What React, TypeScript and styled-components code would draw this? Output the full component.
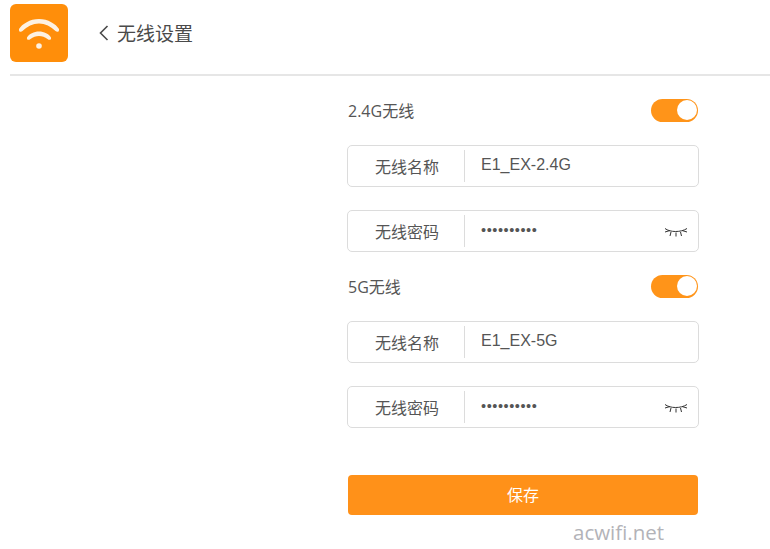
import styled, { createGlobalStyle } from "styled-components";

const FONT = `"Open Sans", "Noto Sans CJK SC", sans-serif`;

const GlobalStyle = createGlobalStyle`
  html, body {
    margin: 0;
    background: #fff;
    font-family: ${FONT};
  }
`;

const Page = styled.div`
  width: 770px;
  height: 549px;
  overflow: hidden;
  padding-left: 10px;
  box-sizing: border-box;
`;

const Header = styled.header`
  display: flex;
  align-items: flex-start;
  height: 76px;
  padding-top: 4px;
  box-sizing: border-box;
  border-bottom: 2px solid #e6e6e6;
`;

const Logo = styled.div`
  width: 58px;
  height: 58px;
  border-radius: 6px;
  background: #ff8e0a;
`;

const BackLink = styled.div`
  display: flex;
  align-items: center;
  gap: 8px;
  height: 58px;
  margin-left: 31px;
  font-size: 19px;
  color: #4a4a4a;
`;

const Form = styled.main`
  width: 352px;
  margin-left: 337px;
  display: flex;
  flex-direction: column;
`;

const SwitchRow = styled.div`
  display: flex;
  align-items: center;
  justify-content: space-between;
  height: 24px;
  margin-top: 22px;
  margin-bottom: 23px;
  padding: 0 1px;
`;

const BandTitle = styled.span`
  padding-top: 2px;
  font-size: 16px;
  line-height: 22px;
  color: #555;
`;

const Toggle = styled.div`
  width: 47px;
  height: 23px;
  border-radius: 12px;
  background: #ff9419;
  display: flex;
  justify-content: flex-end;
  align-items: center;
  padding-right: 1px;
  box-sizing: border-box;
`;

const Knob = styled.span`
  width: 20px;
  height: 20px;
  border-radius: 50%;
  background: #fff;
`;

const Field = styled.div`
  display: flex;
  align-items: center;
  height: 42px;
  box-sizing: border-box;
  border: 1px solid #dcdcdc;
  border-radius: 5px;
  margin-bottom: 23px;
  &:last-child {
    margin-bottom: 0;
  }
`;

const FieldLabel = styled.span`
  width: 117px;
  height: 32px;
  line-height: 34px;
  flex: none;
  box-sizing: border-box;
  border-right: 1px solid #dcdcdc;
  padding-left: 2px;
  text-align: center;
  font-size: 16px;
  color: #555;
`;

const FieldValue = styled.span<{ $dots?: boolean }>`
  flex: 1;
  padding-left: 16px;
  padding-bottom: 3px;
  font-size: ${({ $dots }) => ($dots ? "14.5px" : "16px")};
  letter-spacing: ${({ $dots }) => ($dots ? "0.55px" : "0")};
  color: #555;
  font-family: "Liberation Sans", sans-serif;
`;

const EyeSlot = styled.span`
  display: flex;
  margin-right: 10px;
  margin-top: 3px;
`;

const Section = styled.section`
  display: flex;
  flex-direction: column;
`;

const SaveButton = styled.button`
  height: 40px;
  margin: 47px 1px 0;
  border: none;
  border-radius: 4px;
  background: #ff9119;
  color: #fff;
  font-size: 16px;
  font-family: ${FONT};
  padding: 0 0 3px;
`;

const Watermark = styled.div`
  margin: 5px 0 0 226px;
  font-size: 20.5px;
  line-height: 24px;
  color: #b3b3b8;
  font-family: "Open Sans", sans-serif;
`;

function WifiIcon() {
  return (
    <svg width="58" height="58" viewBox="0 0 58 58">
      <path
        d="M9 25 C12 20 20 15 29 15 C38 15 46 20 49 25 C49.5 28 47 28.5 45.5 27 C41 22.5 35 19.5 29 19.5 C23 19.5 17 22.5 12.5 27 C11 28.5 8.5 28 9 25 Z"
        fill="#fdf1e2"
      />
      <path
        d="M17 33.5 C19 30 24 27.5 29 27.5 C34 27.5 39 30 41 33.5 C41.5 36 39.5 36.5 37.5 35 C35 33 32 32 29 32 C26 32 23 33 20.5 35 C18.5 36.5 16.5 36 17 33.5 Z"
        fill="#fdf1e2"
      />
      <circle cx="29" cy="42" r="2.8" fill="#fdf1e2" />
    </svg>
  );
}

function Chevron() {
  return (
    <svg width="10" height="16" viewBox="0 0 10 16" fill="none">
      <path d="M8.5 1 L1.5 8 L8.5 15" stroke="#4a4a4a" strokeWidth="1.6" />
    </svg>
  );
}

function ClosedEye() {
  return (
    <svg width="24" height="12" viewBox="0 0 24 12" fill="none" stroke="#333" strokeWidth="1">
      <path d="M1 1.5 C6 5.5 17 5.5 23 1.5" />
      <path d="M1 5 L6 3.5 M23 5 L18 3.5 M7 5 L6 9 M12 5.5 V9.5 M16.5 5 L17.5 9" />
    </svg>
  );
}

type Band = { title: string; ssid: string };

const bands: Band[] = [
  { title: "2.4G无线", ssid: "E1_EX-2.4G" },
  { title: "5G无线", ssid: "E1_EX-5G" },
];

export default function App() {
  return (
    <Page>
      <GlobalStyle />
      <Header>
        <Logo>
          <WifiIcon />
        </Logo>
        <BackLink>
          <Chevron />
          无线设置
        </BackLink>
      </Header>
      <Form>
        {bands.map((band) => (
          <Section key={band.title}>
            <SwitchRow>
              <BandTitle>{band.title}</BandTitle>
              <Toggle>
                <Knob />
              </Toggle>
            </SwitchRow>
            <Field>
              <FieldLabel>无线名称</FieldLabel>
              <FieldValue>{band.ssid}</FieldValue>
            </Field>
            <Field>
              <FieldLabel>无线密码</FieldLabel>
              <FieldValue $dots>••••••••••</FieldValue>
              <EyeSlot>
                <ClosedEye />
              </EyeSlot>
            </Field>
          </Section>
        ))}
        <SaveButton>保存</SaveButton>
        <Watermark>acwifi.net</Watermark>
      </Form>
    </Page>
  );
}
